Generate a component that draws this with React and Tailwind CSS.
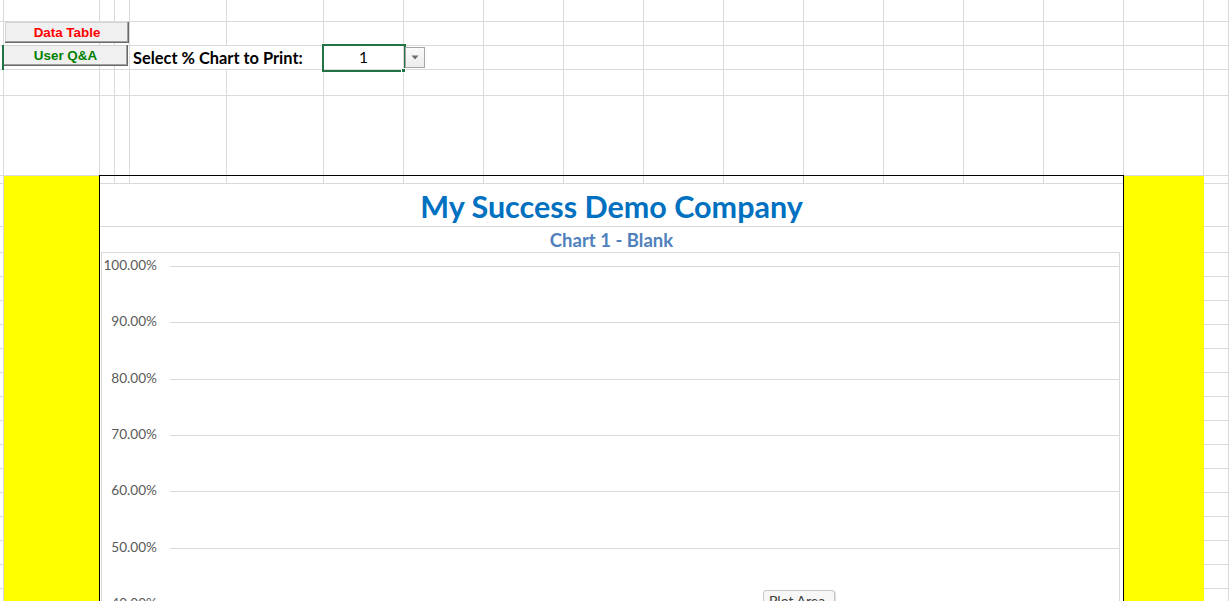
import React from "react";

const ROWS = 23;
const COLS = 18;

function SheetGrid() {
  const cells = [];
  for (let r = 0; r < ROWS; r++) {
    for (let c = 0; c < COLS; c++) {
      if (r === 2 && c === 5) continue;
      const key = `${r}-${c}`;
      const yellow = (c === 1 || c === 16) && r >= 5;
      if (yellow) {
        cells.push(<div key={key} className="bg-[#ffff00]" />);
      } else if (r === 2 && c === 4) {
        cells.push(
          <div
            key={key}
            className="col-span-2 flex items-center whitespace-nowrap border-r border-b border-[#dadada] pl-[3px] pt-[2px] font-['Lato',sans-serif] text-[16.4px] font-bold text-black"
          >
            Select % Chart to Print:
          </div>
        );
      } else if (r === 2 && c === 6) {
        cells.push(
          <div
            key={key}
            className="relative flex items-center justify-center border-r border-b border-[#dadada] pt-[1px] font-['Lato',sans-serif] text-[15.5px] text-black"
          >
            1
            <div className="absolute left-[-2px] top-[-2px] h-[28px] w-[84px] border-2 border-[#217346]" />
            <div className="absolute left-[77px] top-[22px] h-[5px] w-[5px] border border-white bg-[#217346]" />
          </div>
        );
      } else {
        cells.push(
          <div key={key} className="border-r border-b border-[#dadada]" />
        );
      }
    }
  }
  return (
    <div className="grid grid-cols-[4px_96px_15px_15px_97px_97px_repeat(11,80px)_1fr] grid-rows-[22px_24px_24px_26px_80px_8px_43px_26px_repeat(15,24px)]">
      {cells}
    </div>
  );
}

const LABELS = ["100.00%", "90.00%", "80.00%", "70.00%", "60.00%", "50.00%", "40.00%", "30.00%"];

function Chart() {
  return (
    <div className="absolute left-[99px] top-[175px] flex h-[440px] w-[1025px] flex-col border-x border-t border-black">
      <div className="h-[7px] shrink-0" />
      <div className="flex h-[44px] shrink-0 items-center justify-center border-y border-[#d9d9d9] bg-white pt-[2px] font-['Lato',sans-serif] text-[30.5px] font-bold leading-none text-[#0070c0]">
        My Success Demo Company
      </div>
      <div className="flex h-[25px] shrink-0 items-center justify-center bg-white pt-[2px] font-['Lato',sans-serif] text-[18.5px] font-bold leading-none text-[#4f81bd]">
        Chart 1 - Blank
      </div>
      <div className="flex-1 bg-white pl-[1px] pr-[3px]">
        <div className="h-full border border-[#d9d9d9] pt-[13px]">
          {LABELS.map((l) => (
            <div key={l} className="flex h-[56.35px]">
              <div className="relative w-[55px]">
                <span className="absolute right-0 top-0 -translate-y-1/2 font-['Lato',sans-serif] text-[13.6px] leading-none text-[#595959]">
                  {l}
                </span>
              </div>
              <div className="ml-[13px] flex-1 border-t border-[#d9d9d9]" />
            </div>
          ))}
        </div>
      </div>
    </div>
  );
}

const btn =
  "absolute flex items-center justify-center bg-[#f0f0f0] pt-[1px] font-['Liberation_Sans',Arial,sans-serif] font-bold shadow-[inset_-1px_-1px_0_#696969,inset_-2px_-2px_0_#a0a0a0,inset_1px_1px_0_#d4d4d4]";

export default function App() {
  return (
    <div className="relative h-[601px] w-[1229px] overflow-hidden bg-white">
      <SheetGrid />
      <div className={`${btn} left-[5px] top-[22px] h-[21px] w-[124px] text-[13.4px] text-[#ff0000]`}>
        Data Table
      </div>
      <div className={`${btn} left-[3px] top-[45px] h-[21px] w-[125px] text-[13.4px] text-[#008000]`}>
        User Q&amp;A
      </div>
      <div className="absolute left-[2px] top-[45px] h-[25px] w-[2px] bg-[#217346]" />
      <div className="absolute left-[405px] top-[47px] flex h-[21px] w-[20px] items-center justify-center border border-[#a6a6a6] bg-gradient-to-b from-[#fafafa] to-[#ececec]">
        <svg width="8" height="5" viewBox="0 0 8 5">
          <path d="M0.5 0.5 L7.5 0.5 L4 4.5 Z" fill="#6d6d6d" />
        </svg>
      </div>
      <Chart />
      <div className="absolute left-[763px] top-[590px] h-[22px] w-[72px] rounded-[3px] border border-[#c6c6c6] bg-[#f7f7f7] pl-[5px] pt-[3px] font-['Lato',sans-serif] text-[14px] leading-none text-[#404040] shadow-[1px_1px_1px_rgba(0,0,0,0.15)]">
        Plot Area
      </div>
    </div>
  );
}
